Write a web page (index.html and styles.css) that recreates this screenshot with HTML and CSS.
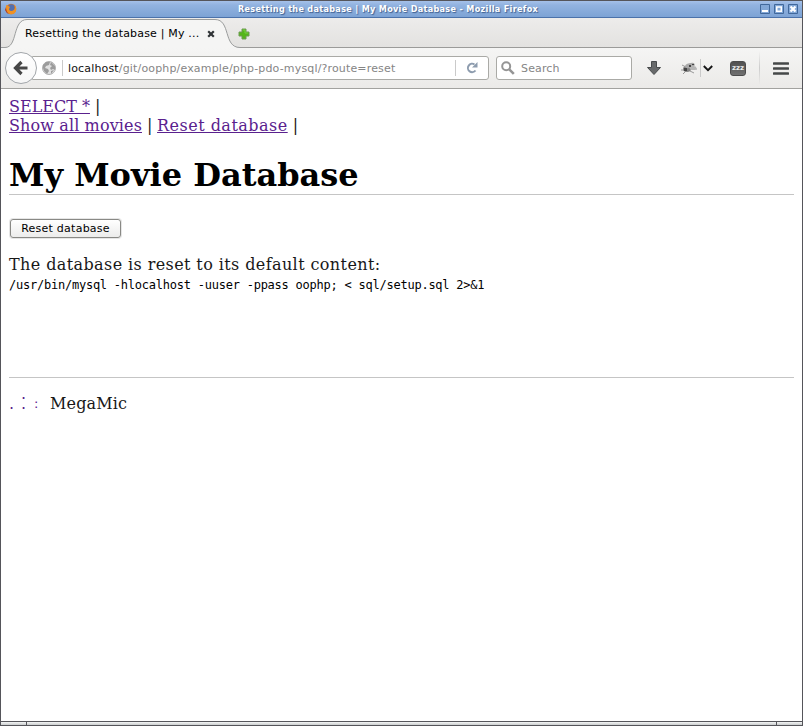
FILE: index.html
```html
<!DOCTYPE html>
<html lang="en">
<head>
<meta charset="utf-8">
<title>Resetting the database | My Movie Database</title>
<link rel="stylesheet" href="styles.css">
</head>
<body>
<div class="window">
  <header class="titlebar">
    <svg class="fox" width="12" height="12" viewBox="0 0 12 12"><circle cx="6" cy="6" r="5.2" fill="#e87918"/><circle cx="6.3" cy="4.7" r="3.4" fill="#536fae"/><path d="M1 2L3 3Q4 3 5 4Q4 5 4 7Q6 9 9 7Q11 5 9 1Q12 4 11 8Q9 12 5 11Q0 9 1 2Z" fill="#ef9225"/><path d="M1 4Q1 9 4 11Q1 10 0 7Z" fill="#ae3d22"/></svg>
    <span class="window-title">Resetting the database | My Movie Database - Mozilla Firefox</span>
    <div class="controls">
      <svg width="10" height="10"><path d="M.5.5h9v9h-9z" fill="#82a7d7" stroke="#41689b"/><path d="M2 6h6v2H2z" fill="#fff"/></svg>
      <svg width="10" height="10"><path d="M.5.5h9v9h-9z" fill="#82a7d7" stroke="#41689b"/><path d="M2.75 3h4.5v4.25h-4.5z" fill="none" stroke="#fff" stroke-width="1.5"/></svg>
      <svg width="10" height="10"><path d="M.5.5h9v9h-9z" fill="#82a7d7" stroke="#41689b"/><path d="M2.5 2.5l5 5m0-5l-5 5" stroke="#fff" stroke-width="2.2"/></svg>
    </div>
  </header>
  <nav class="tabs">
    <div class="tab">
      <svg class="tab-shape" width="240" height="30" viewBox="0 0 240 30"><path d="M0 29.5H4C17 29.5 11 1.5 26 1.5H214C230 1.5 222 29.5 239 29.5V30H0Z" fill="#f5f5f4"/><path d="M0 29.5H4C17 29.5 11 1.5 26 1.5H214C230 1.5 222 29.5 239 29.5" fill="none" stroke="#9b9d9d"/></svg>
      <span class="tab-title">Resetting the database | My ...</span>
      <svg class="tab-close" width="8" height="8"><path d="M1.2 1.2l5.6 5.6m0-5.6L1.2 6.8" stroke="#303436" stroke-width="2.2"/></svg>
    </div>
    <svg class="new-tab" width="12" height="12"><path d="M4 1h4v3h3v4H8v3H4V8H1V4h3z" fill="#55b51a" stroke="#6e9b55"/><path d="M5 2h2v3h3" fill="none" stroke="#78cf42"/></svg>
  </nav>
  <div class="toolbar">
    <div class="back"><svg width="16" height="16"><path d="M14.5 8H3M8.5 2L2.5 8l6 6" fill="none" stroke="#474747" stroke-width="3.2"/></svg></div>
    <div class="address">
      <svg class="globe" width="14" height="14"><circle cx="7" cy="7" r="6.5" fill="#e1e1e1" stroke="#b0b0b0"/><path d="M1 4l3-3 4 0-1 3-3 1-1 2 3 1 1 2-2 3-3-3-1-3zM9 1l4 4v4l-2-1-2 1-1-2 2-2-2-1zM9 10l3-1-3 4z" fill="#9c9c9c"/></svg>
      <i class="sep"></i><span class="url"><b>localhost</b>/git/oophp/example/php-pdo-mysql/?route=reset</span>
      <i class="sep reload-sep"></i>
      <svg class="reload" width="12" height="12"><path d="M9.5 8.5A4.2 4.2 0 1 1 8.5 2.5" fill="none" stroke="#8d9cae" stroke-width="2"/><path d="M11.5 0v5.5H6z" fill="#8d9cae"/></svg>
    </div>
    <div class="search"><svg width="14" height="14"><circle cx="5.2" cy="5.2" r="4" fill="none" stroke="#959595" stroke-width="2"/><path d="M8.3 8.3l4.5 4.5" stroke="#959595" stroke-width="2.6"/></svg><span>Search</span></div>
    <svg class="download" width="14" height="14"><path d="M4.5.5h5v6h4L7 13.5.5 6.5h4z" fill="#686a6b" stroke="#484b4c"/></svg>
    <svg class="bug" width="16" height="13"><path d="M1 3l4 2M0 8h4m-2 4l4-4M9 9l4 2m-2-4h5" stroke="#999" fill="none"/><ellipse cx="6" cy="7" rx="4" ry="3" fill="#858585"/><ellipse cx="9" cy="3.5" rx="5" ry="2.4" fill="#aaa" transform="rotate(-15 9 4)"/><ellipse cx="12" cy="6" rx="3.4" ry="2" fill="#b5b5b5"/><path d="M3 6h3v3H3zm5-3h2v2H8zm3-1h2v1h-2z" fill="#444"/></svg>
    <i class="sep bug-sep"></i>
    <svg class="chevron" width="10" height="7"><path d="M.8 1L5 5.2 9.2 1" fill="none" stroke="#151515" stroke-width="1.9"/></svg>
    <div class="snooze">zzz</div>
    <i class="menu-sep"></i>
    <svg class="menu" width="16" height="13"><path d="M1 1.5h14M1 6.5h14M1 11.5h14" stroke="#454848" stroke-width="2.6" stroke-linecap="round"/></svg>
  </div>
  <main>
    <div class="links"><span class="line"><a class="select">SELECT *</a> |</span><span class="line"><a class="show">Show all movies</a> | <a class="reset">Reset database</a> |</span></div>
    <h1><span>My Movie Database</span></h1>
    <button>Reset database</button>
    <p><span class="message">The database is reset to its default content:</span><code>/usr/bin/mysql -hlocalhost -uuser -ppass oophp; &lt; sql/setup.sql 2&gt;&amp;1</code></p>
    <footer><a class="mark"><span>.</span><span class="tall">⁚</span><span class="short">:</span></a><span class="name">MegaMic</span></footer>
  </main>
  <div class="frame-bottom"></div>
</div>
</body>
</html>
```
FILE: styles.css
```css
* { box-sizing: border-box; }
body { margin: 0; font-family: "DejaVu Sans", sans-serif; }
svg { display: block; flex: none; }
.window { width: 803px; height: 726px; border: 1px solid #55555a; display: flex; flex-direction: column; overflow: hidden; background: #fff; white-space: nowrap; }
.titlebar { height: 17px; flex: none; display: flex; align-items: center; padding: 0 4px 0 4px; background: linear-gradient(#a5c1e9, #92b3e0 25%, #7da3d5); border-bottom: 1px solid #4b72aa; position: relative; }
.window-title { width: 302px; margin-left: 221px; color: #fff; font: bold 9px/15px "DejaVu Sans Condensed", "DejaVu Sans", sans-serif; font-stretch: condensed; letter-spacing: .32px; text-shadow: 1px 1px 1px #3e5f90; }
.controls { display: flex; gap: 4px; margin-left: auto; }
.tabs { height: 30px; flex: none; display: flex; background: linear-gradient(#edeceb, #e3e2e0); border-bottom: 1px solid #9b9b99; position: relative; }
.tab { width: 237px; height: 30px; display: flex; align-items: center; position: relative; padding-left: 24px; }
.tab-shape { position: absolute; left: 0; top: 0; }
.tab-title { position: relative; width: 182px; font-size: 11px; line-height: 14px; margin-top: 1px; letter-spacing: .18px; }
.tab-close { position: relative; margin-top: 1px; }
.new-tab { margin: 10px 0 0; }
.toolbar { height: 41px; flex: none; display: flex; align-items: center; background: linear-gradient(#f5f5f4, #ebeae8); border-bottom: 1px solid #a2a29f; padding-left: 4px; font-size: 11px; }
.back { width: 32px; height: 32px; border: 1px solid #a2a6aa; border-radius: 50%; background: linear-gradient(#fff, #f6f6f6); display: flex; align-items: center; justify-content: center; flex: none; z-index: 1; }
.address { height: 24px; width: 457px; margin-left: -5px; background: #fff; border: 1px solid #aaaaa6; border-radius: 0 3px 3px 0; display: flex; align-items: center; padding-left: 9px; flex: none; }
.sep { width: 1px; height: 16px; background: #cacaca; flex: none; }
.globe { margin-right: 6px; }
.url { color: #858585; margin-left: 5px; width: 387px; letter-spacing: .16px; }
.url b { color: #111; font-weight: normal; }
.reload { margin-left: 10px; }
.search { width: 136px; height: 24px; margin-left: 7px; border: 1px solid #aaaaa6; border-radius: 3px; background: #fff; display: flex; align-items: center; padding-left: 4px; color: #858585; flex: none; }
.search span { margin-left: 6px; letter-spacing: .15px; }
.download { margin-left: 15px; }
.bug { margin-left: 20px; }
.bug-sep { margin-left: 3px; height: 18px; }
.chevron { margin-left: 2px; margin-top: 1px; }
.snooze { width: 16px; height: 15px; margin: 1px 0 0 17px; border-radius: 3px; background: linear-gradient(#505050, #717171); border: 1px solid #4c4c4c; color: #eee; font: bold 7px/12px "DejaVu Sans", sans-serif; text-align: center; display: flex; justify-content: center; }
.menu-sep { width: 1px; height: 34px; margin-left: 13px; background: linear-gradient(transparent, #ccc, transparent); }
.menu { margin-left: 13px; }
main { flex: 1; padding: 8px; font: 200 16px/19px "DejaVu Serif", serif; color: #181818; }
.line { display: block; }
.show { letter-spacing: .12px; }
.reset { letter-spacing: .48px; margin-left: -.5px; }
a { color: #5a218e; text-decoration: underline; text-decoration-thickness: 1px; }
h1 { font: bold 32px/39px "DejaVu Serif", serif; color: #000; margin: 21px 0 24px; border-bottom: 1px solid #c5c5c5; height: 39px; }
button { display: block; width: 111px; height: 19px; padding: 0; margin: 0 0 0 1px; border: 1px solid #898985; border-radius: 3px; background: linear-gradient(#fff, #ececeb); box-shadow: 0 0 0 1px #e6e6e6; font: 11px/16px "DejaVu Sans", sans-serif; letter-spacing: .25px; color: #000; }
p { margin: 17px 0 0; }
.message { display: block; letter-spacing: .4px; }
code { display: block; font: 12px/20px "DejaVu Sans Mono", monospace; letter-spacing: -.235px; padding-top: 1px; color: #000; }
footer { margin-top: 82px; border-top: 1px solid #c5c5c5; padding-top: 16px; display: flex; }
.mark { display: flex; width: 41px; text-decoration: none; }
.mark span { width: 12px; font: 16px/19px "DejaVu Sans", sans-serif; }
.mark .short { font-size: 13px; padding-left: 1px; }
.name { letter-spacing: .15px; }
.frame-bottom { height: 4px; flex: none; border-top: 1px solid #55555a; background: linear-gradient(90deg, transparent 25px, #55555a 25px, #55555a 26px, transparent 26px, transparent 775px, #55555a 775px, #55555a 776px, transparent 776px), linear-gradient(#f4f5f5, #c9cccd); }
```
